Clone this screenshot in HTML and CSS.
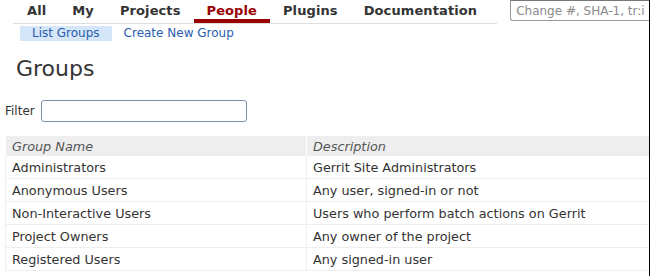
FILE: index.html
```html
<!DOCTYPE html>
<html>
<head>
    <title>Groups</title>
    <link rel="stylesheet" href="styles.css">
</head>
<body>
    <div class="topbar">
        <ul class="menu">
            <li>All</li>
            <li>My</li>
            <li>Projects</li>
            <li class="active">People</li>
            <li>Plugins</li>
            <li>Documentation</li>
        </ul>
        <input class="search" type="text" placeholder="Change #, SHA-1, tr:id, owner:email or reviewer:email">
    </div>
    <div class="subnav">
        <a class="selected">List Groups</a>
        <a>Create New Group</a>
    </div>

    <h1 class="title">Groups</h1>

    <div class="filter">
        <label>Filter</label>
        <input type="text">
    </div>

    <table class="groups">
        <tr>
            <th class="name">Group Name</th>
            <th>Description</th>
        </tr>
        <tr><td>Administrators</td><td>Gerrit Site Administrators</td></tr>
        <tr><td>Anonymous Users</td><td>Any user, signed-in or not</td></tr>
        <tr><td>Non-Interactive Users</td><td>Users who perform batch actions on Gerrit</td></tr>
        <tr><td>Project Owners</td><td>Any owner of the project</td></tr>
        <tr><td>Registered Users</td><td>Any signed-in user</td></tr>
    </table>
</body>
</html>
```

FILE: styles.css
```css
html, body {
    margin: 0;
    height: 100%;
}

body {
    font-family: "DejaVu Sans", Verdana, sans-serif;
    font-size: 13px;
    color: #333;
    background: #fff;
    box-sizing: border-box;
    border-right: 1px solid #000;
    overflow: hidden;
}

.topbar {
    display: flex;
    align-items: flex-start;
    height: 24px;
}

.menu {
    display: flex;
    list-style: none;
    margin: 0 0 0 13px;
    padding: 0 7px 0 1px;
    border-bottom: 1px solid #ddd;
    height: 23px;
    flex-shrink: 0;
}

.menu li {
    padding: 3px 13px 0;
    font-weight: bold;
    font-size: 13px;
    letter-spacing: 0.1px;
    height: 16px;
    border-bottom: 4px solid transparent;
}

.menu li.active {
    color: #990000;
    border-bottom-color: #990000;
}

.search {
    margin-left: 13px;
    flex: 1;
    min-width: 0;
    height: 21px;
    box-sizing: border-box;
    padding: 0 5px;
    border: 1px solid #999;
    border-right: none;
    border-top-color: #777;
    border-radius: 0 0 0 3px;
    font-family: "DejaVu Sans", Verdana, sans-serif;
    font-size: 12px;
}

.search::placeholder {
    color: #8a8a8a;
}

.subnav {
    display: flex;
    margin: 2px 0 0 20px;
    font-size: 12px;
}

.subnav a {
    padding: 0 12px;
    color: #2a5db0;
    line-height: 15px;
}

.subnav a.selected {
    background: #d4e6f7;
}

.title {
    font-size: 22px;
    font-weight: normal;
    margin: 15px 0 0 16px;
    line-height: 26px;
}

.filter {
    display: flex;
    align-items: center;
    margin: 18px 0 0 5px;
    font-size: 12px;
}

.filter input {
    margin-left: 6px;
    width: 206px;
    height: 22px;
    box-sizing: border-box;
    border: 1px solid #7b8fa8;
    border-radius: 3px;
}

.groups {
    margin: 14px 0 0 5px;
    width: 644px;
    border-collapse: collapse;
    border-left: 1px solid #eee;
    font-size: 12.8px;
}

.groups th {
    background: #eee;
    font-weight: normal;
    font-style: italic;
    text-align: left;
    color: #555;
    height: 20px;
    padding: 0 6px;
    border-left: 1px solid #fff;
}

.groups th.name {
    width: 288px;
}

.groups td {
    height: 22px;
    padding: 0 6px;
    border-bottom: 1px solid #eee;
    border-left: 1px solid #eee;
}
```
